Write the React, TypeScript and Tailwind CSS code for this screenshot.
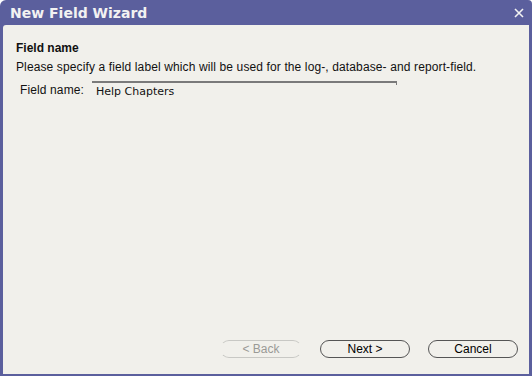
export default function App() {
  return (
    <div className="w-[532px] h-[376px] bg-[#5b5f9d] flex flex-col rounded-tl-[6px] rounded-tr-[4px] overflow-hidden" style={{ fontFamily: '"Liberation Sans", Arial, sans-serif' }}>
      {/* Title bar */}
      <div className="h-[25px] flex items-center justify-between pl-[10px] pr-[8px] shrink-0">
        <span
          className="text-[14px] font-bold text-[#f2f2f2] leading-none"
          style={{ fontFamily: '"DejaVu Sans", Verdana, sans-serif' }}
        >
          New Field Wizard
        </span>
        <svg width="10" height="10" viewBox="0 0 10 10" className="mt-[1px]">
          <path d="M1 1 L9 9 M9 1 L1 9" stroke="#f2f2f2" strokeWidth="1.6" />
        </svg>
      </div>

      {/* Body */}
      <div className="flex-1 ml-[3px] mr-[3px] mb-[2px] bg-[#f1f0eb] rounded-tl-[3px] flex flex-col text-[#111]">
        <div className="pl-[13px] pt-[16px] flex flex-col">
          <div className="text-[12px] font-bold leading-[14px]">Field name</div>
          <div className="text-[12px] leading-[14px] mt-[5px] tracking-[0.12px]">
            Please specify a field label which will be used for the log-, database- and report-field.
          </div>
          <div className="flex items-center mt-[7px] pl-[4px]">
            <span className="text-[12px] leading-[14px] w-[72px] tracking-[0.12px]">Field name:</span>
            <div className="relative w-[305px] h-[18px] border-t-2 border-[#7a7a7a] pl-[4px] flex items-end">
              <span
                className="text-[11px] leading-[14px] text-[#111]"
                style={{ fontFamily: '"DejaVu Sans", Verdana, sans-serif' }}
              >
                Help Chapters
              </span>
              <div className="absolute right-0 top-0 w-[1px] h-[2px] bg-[#7a7a7a]" />
            </div>
          </div>
        </div>

        <div className="flex-1" />

        <div className="flex justify-end items-center gap-[14px] pr-[11px] pb-[16px]">
          <button className="w-[82px] h-[18px] rounded-full border border-[#c8c8c4] border-x-transparent text-[12px] text-[#9a9a96] leading-none">
            &lt; Back
          </button>
          <button className="w-[90px] h-[18px] ml-[4px] rounded-full border border-[#555] text-[12px] text-black leading-none">
            Next &gt;
          </button>
          <button className="w-[90px] h-[18px] ml-[4px] rounded-full border border-[#555] text-[12px] text-black leading-none">
            Cancel
          </button>
        </div>
      </div>
    </div>
  );
}
